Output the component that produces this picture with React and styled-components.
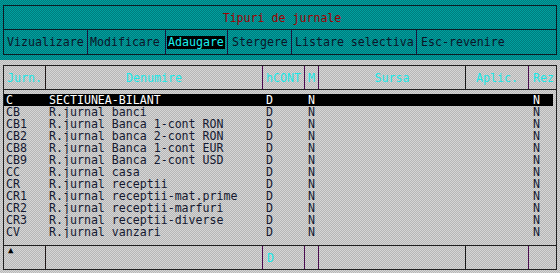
import React from 'react'
import styled, { createGlobalStyle } from 'styled-components'

const GlobalStyle = createGlobalStyle`
  body {
    margin: 0;
    font-family: "DejaVu Sans Mono", "Liberation Mono", monospace;
    font-size: 11.6px;
    background-color: #c6c6c6;
    background-image: repeating-conic-gradient(#b6b6b6 0 25%, #d6d6d6 0 50%);
    background-size: 2px 2px;
  }
`

const TealBar = styled.div`
  height: 60px;
  padding: 5px 3px 0 3px;
  box-sizing: border-box;
  background-color: #008c8c;
  background-image: repeating-conic-gradient(#007c7c 0 25%, #00a0a0 0 50%);
  background-size: 2px 2px;
`

const Frame = styled.div`
  width: 554px;
  border: 1px solid #0c1c24;
  box-sizing: border-box;
`

const Title = styled.div`
  height: 23px;
  display: flex;
  align-items: center;
  justify-content: center;
  color: #a00000;
  padding-left: 4px;
`

const Menu = styled.div`
  display: flex;
  height: 24px;
  border-top: 1px solid #0c1c24;
`

const MenuItem = styled.div`
  width: ${p => p.w}px;
  display: flex;
  align-items: center;
  padding-left: ${p => p.pad || 2}px;
  box-sizing: border-box;
  color: #0c1428;
  border-right: ${p => (p.last ? 'none' : '1px solid #1c1640')};
  span {
    background: ${p => (p.active ? '#000' : 'transparent')};
    color: ${p => (p.active ? '#18f0f0' : 'inherit')};
    line-height: 13px;
    padding: 0 1px;
  }
`

const TableFrame = styled.div`
  margin: 5px 3px 0 3px;
  width: 554px;
  height: 205px;
  border: 1px solid #202020;
  box-sizing: border-box;
  display: flex;
  flex-direction: column;
`

const BandRow = styled.div`
  display: flex;
  height: 24px;
  border-bottom: ${p => (p.top ? '1px solid #202020' : 'none')};
  border-top: ${p => (p.top ? 'none' : '1px solid #202020')};
  box-sizing: border-box;
`

const Cell = styled.div`
  width: ${p => p.w}px;
  flex: ${p => (p.grow ? 1 : 'none')};
  box-sizing: border-box;
  display: flex;
  align-items: ${p => (p.alignTop ? 'flex-start' : 'center')};
  justify-content: ${p => p.justify || 'center'};
  padding-left: ${p => p.pad || 0}px;
  color: #18e8e8;
  border-right: ${p => (p.line ? `1px solid ${p.line}` : 'none')};
  overflow: hidden;
  white-space: pre;
`

const Arrow = styled.span`
  color: #000;
  font-size: 9px;
  line-height: 9px;
  height: 9px;
`

const Body = styled.div`
  flex: 1;
  padding: 4px 3px 0 0;
`

const Row = styled.div`
  display: grid;
  grid-template-columns: 43px 217px 42px 225px 1fr;
  height: 12px;
  line-height: 12px;
  padding-left: 2px;
  white-space: pre;
  background: ${p => (p.sel ? '#000' : 'transparent')};
  color: ${p => (p.sel ? '#ffffff' : '#141830')};
  span {
    height: 12px;
    overflow: hidden;
  }
`

const cols = [
  { w: 42, label: 'Jurn.', justify: 'flex-start', pad: 3, line: '#201818' },
  { w: 217, label: 'Denumire', line: '#4a0a50' },
  { w: 42, label: 'hCONT', line: '#4a0a50' },
  { w: 14, label: 'M', line: '#4a0a50' },
  { w: 147, label: 'Sursa', line: '#181818' },
  { w: 63, label: 'Aplic.', line: '#4a0a50' },
  { w: 27, label: 'Rez', justify: 'flex-start', pad: 4, grow: true },
]

const rows = [
  ['C', 'SECTIUNEA-BILANT'],
  ['CB', 'R.jurnal banci'],
  ['CB1', 'R.jurnal Banca 1-cont RON'],
  ['CB2', 'R.jurnal banca 2-cont RON'],
  ['CB8', 'R.jurnal Banca 1-cont EUR'],
  ['CB9', 'R.jurnal Banca 2-cont USD'],
  ['CC', 'R.jurnal casa'],
  ['CR', 'R.jurnal receptii'],
  ['CR1', 'R.jurnal receptii-mat.prime'],
  ['CR2', 'R.jurnal receptii-marfuri'],
  ['CR3', 'R.jurnal receptii-diverse'],
  ['CV', 'R.jurnal vanzari'],
]

const menu = [
  { w: 84, label: 'Vizualizare' },
  { w: 78, label: 'Modificare', pad: 1 },
  { w: 62, label: 'Adaugare', active: true, pad: 1 },
  { w: 64, label: 'Stergere', pad: 3 },
  { w: 125, label: 'Listare selectiva', pad: 2 },
  { w: 139, label: 'Esc-revenire', pad: 3, last: true },
]

const App = () => (
  <>
    <GlobalStyle />
    <TealBar>
      <Frame>
        <Title>Tipuri de jurnale</Title>
        <Menu>
          {menu.map(m => (
            <MenuItem key={m.label} w={m.w} pad={m.pad} active={m.active} last={m.last}>
              <span>{m.label}</span>
            </MenuItem>
          ))}
        </Menu>
      </Frame>
    </TealBar>
    <TableFrame>
      <BandRow top>
        {cols.map(c => (
          <Cell key={c.label} w={c.w} justify={c.justify} pad={c.pad} line={c.line} grow={c.grow}>
            {c.label}
          </Cell>
        ))}
      </BandRow>
      <Body>
        {rows.map(([code, name], i) => (
          <Row key={code} sel={i === 0}>
            <span>{code}</span>
            <span>{name}</span>
            <span>D</span>
            <span>N</span>
            <span>N</span>
          </Row>
        ))}
      </Body>
      <BandRow>
        {cols.map((c, i) => (
          <Cell
            key={c.label}
            w={c.w}
            justify={i === 0 ? 'flex-start' : i === 2 ? 'flex-start' : 'center'}
            pad={i === 0 ? 4 : i === 2 ? 4 : 0}
            alignTop={i === 0}
            line={c.line}
            grow={c.grow}
          >
            {i === 0 ? <Arrow>▲</Arrow> : i === 2 ? 'D' : ''}
          </Cell>
        ))}
      </BandRow>
    </TableFrame>
  </>
)

export default App
